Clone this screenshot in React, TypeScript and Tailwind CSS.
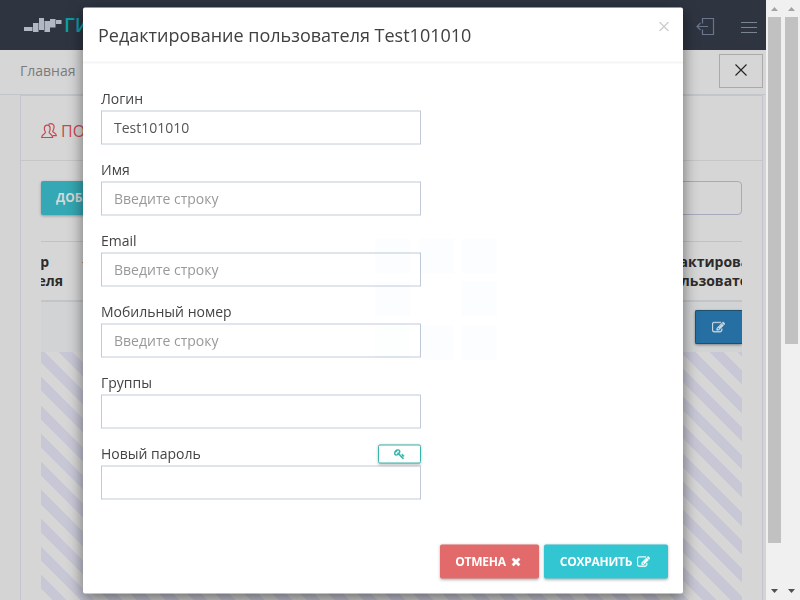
import React from "react";

const EDIT =
  "M888 1184l116-116-152-152-116 116v56h96v96h56zm440-720q-16-16-33 1l-350 350q-17 17-1 33t33-1l350-350q17-17 1-33zm80 594v190q0 119-84.5 203.5t-203.5 84.5h-832q-119 0-203.5-84.5t-84.5-203.5v-832q0-119 84.5-203.5t203.5-84.5h832q63 0 117 25 15 7 18 23 3 17-9 29l-49 49q-14 14-32 8-23-6-45-6h-832q-66 0-113 47t-47 113v832q0 66 47 113t113 47h832q66 0 113-47t47-113v-126q0-13 9-22l64-64q15-15 35-7t20 29zm-96-738l288 288-672 672h-288v-288zm444 132l-92 92-288-288 92-92q28-28 68-28t68 28l152 152q28 28 28 68t-28 68z";
const TIMES =
  "M1490 1322q0 40-28 68l-136 136q-28 28-68 28t-68-28l-294-294-294 294q-28 28-68 28t-68-28l-136-136q-28-28-28-68t28-68l294-294-294-294q-28-28-28-68t28-68l136-136q28-28 68-28t68 28l294 294 294-294q28-28 68-28t68 28l136 136q28 28 28 68t-28 68l-294 294 294 294q28 28 28 68z";
const KEY =
  "M832 512q0-80-56-136t-136-56-136 56-56 136q0 42 19 83-41-19-83-19-80 0-136 56t-56 136 56 136 136 56 136-56 56-136q0-42-19-83 41 19 83 19 80 0 136-56t56-136zm851 704q0 17-49 66t-66 49q-9 0-28.5-16t-36.5-33-38.5-40-24.5-26l-96 96 220 220q28 28 28 68 0 42-39 81t-81 39q-40 0-68-28l-671-671q-176 131-365 131-163 0-265.5-102.5t-102.5-265.5q0-160 95-313t248-248 313-95q163 0 265.5 102.5t102.5 265.5q0 189-131 365l355 355 96-96q-3-3-26-24.5t-40-38.5-33-36.5-16-28.5q0-17 49-66t66-49q13 0 23 10 6 6 46 44.5t82 79.5 86.5 86 73 78 28.500 41z";

function Glyph({ d, className }: { d: string; className: string }) {
  return (
    <svg viewBox="0 0 1792 1792" fill="currentColor" stroke="currentColor" strokeWidth="50" className={className}>
      <path d={d} />
    </svg>
  );
}

function Header() {
  return (
    <header className="flex h-[50px] shrink-0 items-center bg-[#2e3541] pl-6 pr-[9px]">
      <svg viewBox="0 0 38 15" className="h-[15px] w-[38px] shrink-0" fill="#b2b8c1">
        <rect x="0" y="9" width="8.500" height="4" />
        <rect x="9" y="5" width="5.500" height="9" />
        <rect x="15" y="0" width="5" height="12" />
        <rect x="20.5" y="3" width="5.500" height="11" />
        <rect x="26" y="1" width="5.500" height="8.500" />
        <rect x="32" y="2" width="5.500" height="4" />
      </svg>
      <span className="ml-[2px] text-[20px] font-semibold leading-none text-[#0b9ca5]">ГИС</span>
      <div className="ml-auto flex items-center gap-[26px]">
        <svg viewBox="0 0 19 18" className="mt-1 h-[18px] w-[19px]" fill="none" stroke="#68758a" strokeWidth="1.2">
          <path d="M6.500 5.500v-5h11v16h-11v-5M12 8.500H1M4.500 5L1 8.500L4.500 12" />
        </svg>
        <svg viewBox="0 0 16 12" className="mt-[6px] h-3 w-4" stroke="#7a8594">
          <path d="M0 .5h16M0 5.500h16M0 10.500h16" />
        </svg>
      </div>
    </header>
  );
}

function UsersIcon() {
  return (
    <svg viewBox="0 0 16 16" className="h-4 w-4 shrink-0" fill="none" stroke="#c84652" strokeWidth="1.2">
      <path d="M4.500 9.300C2.800 6.500 2.700 2.200 6.200 2.200s3.600 4.300 1.900 7.100c0 1.800 3.600 1.700 3.600 5.200H.7c0-3.500 3.800-3.400 3.800-5.200z" />
      <path d="M7.500 1.400C11-.4 13.600 1.500 13 4.800c-.2 1.800-.8 2.700-1.300 3.500 0 1.300 3.600 1.400 3.600 4.300h-3.400" />
    </svg>
  );
}

function Page() {
  return (
    <div className="flex h-[600px] w-[766px] flex-col overflow-hidden bg-[#d4d4d4]">
      <Header />
      <div className="flex h-[45px] shrink-0 items-center justify-between border-b border-[#c2c6cb] bg-[#d6d6d6] pl-5 pr-[3px]">
        <span className="-mt-[3px] text-[14px] text-[#7b7b7b]">Главная</span>
        <div className="-mt-[3px] flex h-[34px] w-11 items-center justify-center border border-[#aaa]">
          <svg viewBox="0 0 12 12" className="-mt-px h-3 w-3" stroke="#222" strokeWidth="1.1">
            <path d="M.5 .5l11 11M11.500 .5l-11 11" />
          </svg>
        </div>
      </div>
      <main className="ml-5 mr-[3px] flex min-h-0 flex-1 flex-col border-x border-t border-[#c2c5ce] bg-[#d6d6d6]">
        <div className="flex h-[65px] shrink-0 items-center gap-1 border-b border-[#c6c6c6] pl-5 pt-[6px] text-[16px] font-medium uppercase text-[#c84652]">
          <UsersIcon />
          <span>Пользователи</span>
        </div>
        <div className="mx-5 flex h-[81px] shrink-0 items-start justify-between border-b border-[#c1c2c3] pt-5">
          <button className="h-[34px] rounded-[2px] bg-[#34a8b4] px-[15px] text-[12px] font-bold uppercase text-[#d9d9d9] shadow-[0_1px_3px_rgba(0,0,0,0.3)]">
            Добавить
          </button>
          <div className="h-[34px] w-40 rounded border border-[#a5abba]" />
        </div>
        <div className="mx-5 flex h-[60px] shrink-0 justify-between overflow-hidden border-b-2 border-[#c2c4c8] pt-[10px] text-[14px] font-bold leading-[19px] text-[#2b2b2b]">
          <div className="flex w-[300px]">
            <div className="flex w-[22px] flex-col items-end text-right">
              <span className="mr-[14px]">ер</span>
              <span>теля</span>
            </div>
            <span className="ml-[19px] font-normal">-</span>
          </div>
          <div className="w-[69px] whitespace-nowrap">
            <div className="-ml-[11px]">едактирование</div>
            <div className="-ml-[10px]">пользователя</div>
          </div>
        </div>
        <div className="mx-5 flex h-[50px] shrink-0 justify-end overflow-hidden bg-[#d1d3d5] pt-[8px]">
          <div className="flex h-[34px] w-[47px] items-center justify-center rounded-l-[2px] border border-r-0 border-[#1f4f70] bg-[#266fa3] pr-[2px] text-[#cfdce5] shadow-[0_1px_3px_rgba(0,0,0,0.4)]">
            <Glyph d={EDIT} className="h-[13px] w-[13px]" />
          </div>
        </div>
        <div className="mx-5 h-[251.3px] shrink-0 bg-[repeating-linear-gradient(45deg,transparent_0px,transparent_10px,#c7c7d6_10px,#c7c7d6_20px)]" />
      </main>
    </div>
  );
}

function Arrow({ down }: { down?: boolean }) {
  return (
    <svg viewBox="0 0 7 4" className="h-1 w-[7px]" fill={down ? "#505050" : "#a3a3a3"}>
      <path d={down ? "M0 0h7L3.500 4z" : "M0 4h7L3.500 0z"} />
    </svg>
  );
}

function Scrollbar({ thumb }: { thumb: string }) {
  return (
    <div className="flex h-[600px] w-[17px] flex-col items-center bg-[#f0f0f0]">
      <div className="flex h-[17px] shrink-0 items-center">
        <Arrow />
      </div>
      <div className={`w-[13px] bg-[#c1c1c1] ${thumb}`} />
      <div className="mt-auto flex h-[18px] items-center">
        <Arrow down />
      </div>
    </div>
  );
}

function Field({ label, value, placeholder, action }: { label: string; value?: string; placeholder?: string; action?: React.ReactNode }) {
  return (
    <div className="h-[71px] w-80">
      <div className="flex h-5 items-center justify-between text-[14px] text-[#444]">
        <span>{label}</span>
        {action}
      </div>
      <input
        className="mt-[3px] block h-[34px] w-full border border-[#c2cad8] bg-white px-3 pb-px text-[14px] text-[#555] outline-none placeholder:text-[#999]"
        defaultValue={value}
        placeholder={placeholder}
      />
    </div>
  );
}

const squares = [
  "bg-[#6496ff]/2", "bg-[#6496ff]/2", "bg-[#6496ff]/2",
  "bg-[#6496ff]/2", "bg-transparent", "bg-[#6496ff]/2",
  "bg-[#64ffb0]/2", "bg-[#6496ff]/2", "bg-[#6496ff]/2",
];

function Modal() {
  return (
    <div className="absolute left-[83px] top-2 flex h-[586px] w-[600px] -translate-y-[0.5px] flex-col rounded-[2px] bg-white shadow-[0_5px_15px_rgba(0,0,0,0.5)] will-change-transform">
      <div className="flex h-[56px] shrink-0 justify-between border-b-2 border-[#f5f5f5] pl-[15px] pr-[14px]">
        <h4 className="pt-[14px] text-[18px] leading-[26px] text-[#404040]">Редактирование пользователя Test101010</h4>
        <svg viewBox="0 0 10 10" className="mt-[14px] h-[10px] w-[10px]" stroke="#cfcfcf" strokeWidth="1.5">
          <path d="M.5 .5l9 9M9.500 .5l-9 9" />
        </svg>
      </div>
      <form className="pl-[18px] pt-6">
        <Field label="Логин" value="Test101010" />
        <Field label="Имя" placeholder="Введите строку" />
        <Field label="Email" placeholder="Введите строку" />
        <Field label="Мобильный номер" placeholder="Введите строку" />
        <Field label="Группы" />
        <Field
          label="Новый пароль"
          action={
            <button type="button" className="mt-[3px] flex h-[19px] w-[43px] items-center justify-center rounded-[2px] border border-[#36b5a8] bg-white text-[#36b5a8] shadow-[0_1px_3px_rgba(0,0,0,0.25)]">
              <Glyph d={KEY} className="h-[11px] w-[11px]" />
            </button>
          }
        />
      </form>
      <div className="mb-[15px] mr-[15px] mt-auto flex justify-end gap-[5px] text-[12px] font-bold text-white">
        <button className="flex h-[34px] w-[99px] items-center justify-center gap-1 rounded-[2px] bg-[#e26a6a] pr-[2px] uppercase tracking-[-0.25px] shadow-[0_1px_3px_rgba(0,0,0,0.3)]">
          Отмена
          <Glyph d={TIMES} className="h-[12px] w-[12px]" />
        </button>
        <button className="flex h-[34px] w-[124px] items-center justify-center gap-[5px] rounded-[2px] bg-[#32c5d2] pr-[2px] uppercase tracking-[-0.25px] shadow-[0_1px_3px_rgba(0,0,0,0.3)]">
          Сохранить
          <Glyph d={EDIT} className="h-[13px] w-[13px]" />
        </button>
      </div>
      <div className="pointer-events-none absolute left-[292px] top-[230.5px] grid grid-cols-3 gap-[8.5px]">
        {squares.map((c, i) => (
          <div key={i} className={`h-[35px] w-[35px] ${c}`} />
        ))}
      </div>
    </div>
  );
}

export default function App() {
  return (
    <div className="relative flex h-[600px] w-[800px] overflow-hidden bg-[#f0f0f0] font-['Open_Sans',sans-serif]">
      <Page />
      <Scrollbar thumb="h-[526px]" />
      <Scrollbar thumb="h-[327px]" />
      <Modal />
    </div>
  );
}
